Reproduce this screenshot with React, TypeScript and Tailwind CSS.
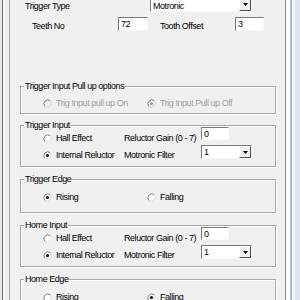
import React from 'react';

function Radio({ checked = false, disabled = false }: { checked?: boolean; disabled?: boolean }) {
  return (
    <svg width="9" height="9" viewBox="0 0 9 9" className="flex-none">
      <circle cx="4.5" cy="4.5" r="4" fill={disabled ? '#f0f0f0' : '#ffffff'} />
      <path d="M1.7 7.3 A4 4 0 0 1 7.3 1.7" stroke="#7a7a7a" fill="none" />
      <path d="M7.3 1.7 A4 4 0 0 1 1.7 7.3" stroke="#d8d8d8" fill="none" />
      {checked && <circle cx="4.5" cy="4.5" r="1.6" fill={disabled ? '#a0a0a0' : '#111111'} />}
    </svg>
  );
}

function Option({ label, checked = false, disabled = false, className = '' }: { label: string; checked?: boolean; disabled?: boolean; className?: string }) {
  return (
    <div className={`flex items-center gap-[4px] h-[12px] ${className}`}>
      <Radio checked={checked} disabled={disabled} />
      <span className={`leading-[12px] whitespace-nowrap ${disabled ? 'text-[#a0a0a0]' : ''}`}>{label}</span>
    </div>
  );
}

function Field({ value, className = '' }: { value: string; className?: string }) {
  return (
    <div className={`bg-white border border-t-[#7a7a7a] border-l-[#7a7a7a] border-b-[#f8f8f8] border-r-[#f8f8f8] pl-[2px] leading-[12px] ${className}`}>
      {value}
    </div>
  );
}

function Combo({ value, className = '', textClass = '' }: { value: string; className?: string; textClass?: string }) {
  return (
    <div className={`flex bg-white border border-t-[#7a7a7a] border-l-[#7a7a7a] border-b-[#f8f8f8] border-r-[#f8f8f8] ${className}`}>
      <span className={`flex-1 pl-[2px] leading-[12px] ${textClass}`}>{value}</span>
      <div className="w-[12px] flex items-center justify-center bg-[#f0f0f0] border border-t-white border-l-white border-b-[#505050] border-r-[#505050]">
        <svg width="5" height="3" viewBox="0 0 5 3">
          <path d="M0 0h5L2.5 3z" fill="#000" />
        </svg>
      </div>
    </div>
  );
}

function Group({ title, className = '', children }: { title: string; className?: string; children: React.ReactNode }) {
  return (
    <div className={`relative flex-none border border-[#a8a8a8] shadow-[inset_1px_1px_0_#fff,1px_1px_0_#fff] ${className}`}>
      <span className="absolute -top-[7px] left-[3px] px-[1px] bg-[#f0f0f0] leading-[12px] whitespace-nowrap">{title}</span>
      {children}
    </div>
  );
}

function InputGroup({ title, className = '' }: { title: string; className?: string }) {
  return (
    <Group title={title} className={`h-[42px] ${className}`}>
      <div className="flex pl-[22px]">
        <div className="w-[81px] flex flex-col gap-[5px] pt-[6px]">
          <Option label="Hall Effect" />
          <Option label="Internal Reluctor" checked />
        </div>
        <div className="w-[77px] flex flex-col gap-[5px] pt-[6px]">
          <span className="leading-[12px] whitespace-nowrap">Reluctor Gain (0 - 7)</span>
          <span className="leading-[12px] whitespace-nowrap">Motronic Filter</span>
        </div>
        <div className="flex flex-col pt-[1px]">
          <Field value="0" className="w-[28px] h-[13px]" />
          <Combo value="1" className="w-[51px] h-[14px] mt-[5px]" />
        </div>
      </div>
    </Group>
  );
}

function EdgeGroup({ title, rising, className = '' }: { title: string; rising: boolean; className?: string }) {
  return (
    <Group title={title} className={`h-[34px] ${className}`}>
      <div className="flex pl-[22px] pt-[11px]">
        <Option label="Rising" checked={rising} className="w-[104px]" />
        <Option label="Falling" checked={!rising} />
      </div>
    </Group>
  );
}

export default function App() {
  return (
    <div className="w-[300px] h-[300px] overflow-hidden flex bg-[#f0f0f0] text-black text-[9px] tracking-[-0.45px] font-['Liberation_Sans',Arial,sans-serif]">
      {/* left frame */}
      <div className="w-[10px] flex-none flex">
        <div className="w-[2px] bg-[#e8e8e8]" />
        <div className="w-[1px] bg-[#6a6a6a]" />
        <div className="w-[1px] bg-white" />
        <div className="w-[5px]" />
        <div className="w-[1px] bg-[#a8a8a8]" />
      </div>

      {/* dialog content */}
      <div className="w-[275px] flex-none pl-[10px] pr-[9px] flex flex-col">
        <div className="flex items-start h-[16px] -mt-[4px] flex-none">
          <span className="w-[130px] pl-[5px] mt-[4px] leading-[12px]">Trigger Type</span>
          <Combo value="Motronic" className="w-[102px] h-[16px]" textClass="pt-[3px]" />
        </div>
        <div className="flex items-start h-[14px] mt-[5px] flex-none">
          <span className="w-[98px] pl-[12px] mt-[3px] leading-[12px]">Teeth No</span>
          <Field value="72" className="w-[30px] h-[14px]" />
          <span className="w-[75px] ml-[12px] mt-[3px] leading-[12px]">Tooth Offset</span>
          <Field value="3" className="w-[29px] h-[14px]" />
        </div>

        <Group title="Trigger Input Pull up options" className="h-[28px] mt-[55px]">
          <div className="flex pl-[22px] pt-[10px]">
            <Option label="Trig Input pull up On" disabled className="w-[104px]" />
            <Option label="Trig Input Pull up Off" disabled checked />
          </div>
        </Group>

        <InputGroup title="Trigger Input" className="mt-[11px]" />
        <EdgeGroup title="Trigger Edge" rising className="mt-[12px]" />
        <InputGroup title="Home Input" className="mt-[12px]" />
        <EdgeGroup title="Home Edge" rising={false} className="mt-[12px]" />
      </div>

      {/* right window frame */}
      <div className="flex-1 flex">
        <div className="w-[1px] bg-[#8c8c8c]" />
        <div className="w-[1px] bg-[#f4f4f4]" />
        <div className="w-[3px] bg-[#fafcfe]" />
        <div className="w-[1px] bg-[#b9c9da]" />
        <div className="w-[1px] bg-[#a3b4c6]" />
        <div className="w-[3px] bg-[#f2f6fa]" />
        <div className="flex-1 bg-[#dce7f3]" />
      </div>
    </div>
  );
}
